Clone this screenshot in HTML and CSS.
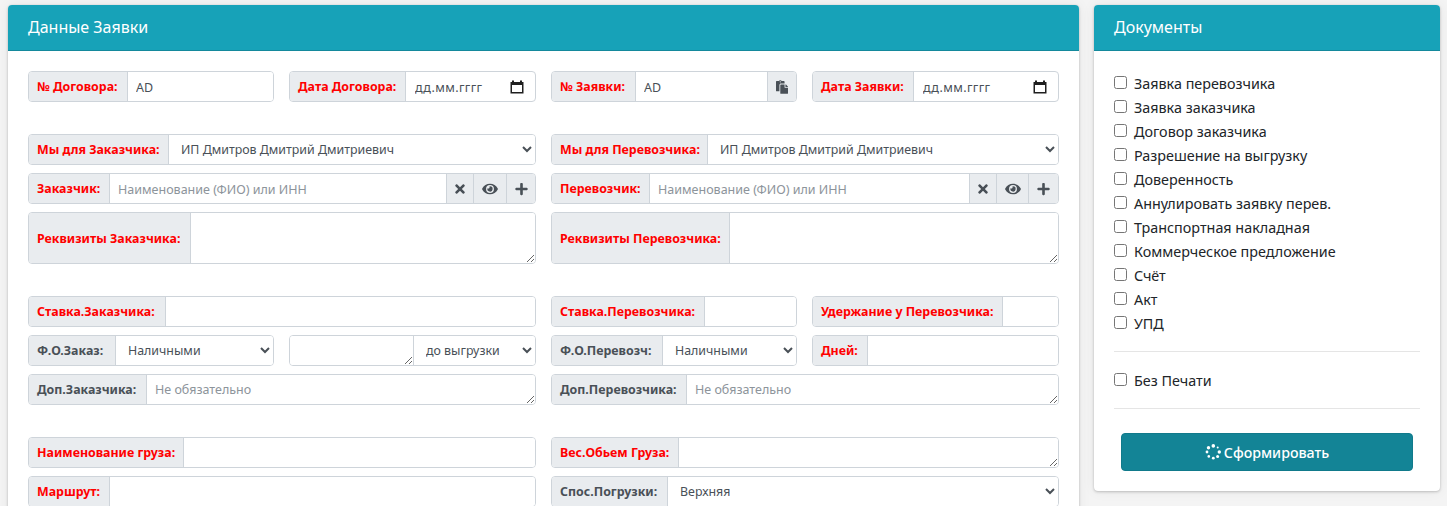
FILE: index.html
```html
<!DOCTYPE html>
<html lang="ru">
<head>
<meta charset="utf-8">
<title>Данные Заявки</title>
<link rel="stylesheet" href="styles.css">
</head>
<body>
<svg class="sprite" width="0" height="0" aria-hidden="true">
  <symbol id="i-times" viewBox="0 0 352 512"><path d="M242.72 256l100.07-100.07c12.28-12.28 12.28-32.19 0-44.48l-22.24-22.24c-12.28-12.28-32.19-12.28-44.48 0L176 189.28 75.93 89.21c-12.28-12.28-32.19-12.28-44.48 0L9.21 111.45c-12.28 12.28-12.28 32.19 0 44.48L109.28 256 9.21 356.07c-12.28 12.28-12.28 32.19 0 44.48l22.24 22.24c12.28 12.28 32.2 12.28 44.48 0L176 322.72l100.07 100.07c12.28 12.28 32.2 12.28 44.48 0l22.24-22.24c12.28-12.28 12.28-32.19 0-44.48L242.72 256z"/></symbol>
  <symbol id="i-eye" viewBox="0 0 576 512"><path d="M572.52 241.4C518.29 135.59 410.93 64 288 64S57.68 135.64 3.48 241.41a32.35 32.35 0 0 0 0 29.19C57.71 376.41 165.07 448 288 448s230.32-71.64 284.52-177.41a32.35 32.35 0 0 0 0-29.19zM288 400a144 144 0 1 1 144-144 143.93 143.93 0 0 1-144 144zm0-240a95.31 95.31 0 0 0-25.31 3.79 47.85 47.85 0 0 1-66.9 66.9A95.78 95.78 0 1 0 288 160z"/></symbol>
  <symbol id="i-plus" viewBox="0 0 448 512"><path d="M416 208H272V64c0-17.67-14.33-32-32-32h-32c-17.67 0-32 14.33-32 32v144H32c-17.67 0-32 14.33-32 32v32c0 17.67 14.33 32 32 32h144v144c0 17.67 14.33 32 32 32h32c17.67 0 32-14.33 32-32V304h144c17.67 0 32-14.33 32-32v-32c0-17.67-14.33-32-32-32z"/></symbol>
  <symbol id="i-paste" viewBox="0 0 448 512"><path d="M128 184c0-30.879 25.122-56 56-56h136V56c0-13.255-10.745-24-24-24h-80.61C204.306 12.89 183.637 0 160 0s-44.306 12.89-55.39 32H24C10.745 32 0 42.745 0 56v336c0 13.255 10.745 24 24 24h104V184zm32-144c13.255 0 24 10.745 24 24s-10.745 24-24 24-24-10.745-24-24 10.745-24 24-24zm184 248h104v200c0 13.255-10.745 24-24 24H184c-13.255 0-24-10.745-24-24V184c0-13.255 10.745-24 24-24h136v104c0 13.2 10.8 24 24 24zm104-38.059V256h-96v-96h6.059a24 24 0 0 1 16.97 7.029l65.941 65.941a24.002 24.002 0 0 1 7.03 16.971z"/></symbol>
  <symbol id="i-cal" viewBox="0 0 16 16"><path d="M3 1.5h2V3h6V1.5h2V3h1.5v11.5h-13V3H3zM3 6v7h10V6z" fill-rule="evenodd"/></symbol>
</svg>

<div class="page">
  <main class="card">
    <header class="card-head">Данные Заявки</header>
    <div class="card-body">

      <section class="section">
        <div class="col">
          <div class="split">
            <div class="group"><label class="lbl req w-dog">№ Договора:</label><input class="ctl" type="text" value="AD"></div>
            <div class="group"><label class="lbl req w-ddog">Дата Договора:</label><div class="date"><input class="ctl date-in" type="text" value="дд.мм.гггг"><svg class="cal"><use href="#i-cal"/></svg></div></div>
          </div>
        </div>
        <div class="col">
          <div class="split">
            <div class="group"><label class="lbl req w-zay">№ Заявки:</label><input class="ctl" type="text" value="AD"><span class="addon w-paste"><svg class="ic ic-paste"><use href="#i-paste"/></svg></span></div>
            <div class="group"><label class="lbl req w-dzay">Дата Заявки:</label><div class="date"><input class="ctl date-in" type="text" value="дд.мм.гггг"><svg class="cal"><use href="#i-cal"/></svg></div></div>
          </div>
        </div>
      </section>

      <section class="section">
        <div class="col">
          <div class="group"><label class="lbl req w-myz">Мы для Заказчика:</label><select class="ctl sel"><option>ИП Дмитров Дмитрий Дмитриевич</option></select></div>
          <div class="group"><label class="lbl req w-zak">Заказчик:</label><input class="ctl" type="text" placeholder="Наименование (ФИО) или ИНН"><span class="addon w-x"><svg class="ic ic-x"><use href="#i-times"/></svg></span><span class="addon w-eye"><svg class="ic ic-eye"><use href="#i-eye"/></svg></span><span class="addon w-plus-l"><svg class="ic ic-plus"><use href="#i-plus"/></svg></span></div>
          <div class="group tall"><label class="lbl req w-rz">Реквизиты Заказчика:</label><textarea class="ctl area"></textarea></div>
        </div>
        <div class="col">
          <div class="group"><label class="lbl req w-myp">Мы для Перевозчика:</label><select class="ctl sel"><option>ИП Дмитров Дмитрий Дмитриевич</option></select></div>
          <div class="group"><label class="lbl req w-per">Перевозчик:</label><input class="ctl" type="text" placeholder="Наименование (ФИО) или ИНН"><span class="addon w-x"><svg class="ic ic-x"><use href="#i-times"/></svg></span><span class="addon w-eye2"><svg class="ic ic-eye"><use href="#i-eye"/></svg></span><span class="addon w-plus"><svg class="ic ic-plus"><use href="#i-plus"/></svg></span></div>
          <div class="group tall"><label class="lbl req w-rp">Реквизиты Перевозчика:</label><textarea class="ctl area"></textarea></div>
        </div>
      </section>

      <section class="section">
        <div class="col">
          <div class="group"><label class="lbl req w-sz">Ставка.Заказчика:</label><input class="ctl" type="text"></div>
          <div class="split">
            <div class="group"><label class="lbl w-foz">Ф.О.Заказ:</label><select class="ctl sel"><option>Наличными</option></select></div>
            <div class="group"><textarea class="ctl area first w-ta"></textarea><select class="ctl sel"><option>до выгрузки</option></select></div>
          </div>
          <div class="group"><label class="lbl w-dopz">Доп.Заказчика:</label><textarea class="ctl area" placeholder="Не обязательно"></textarea></div>
        </div>
        <div class="col">
          <div class="split">
            <div class="group"><label class="lbl req w-sp">Ставка.Перевозчика:</label><input class="ctl" type="text"></div>
            <div class="group"><label class="lbl req w-ud">Удержание у Перевозчика:</label><input class="ctl" type="text"></div>
          </div>
          <div class="split">
            <div class="group"><label class="lbl w-fop">Ф.О.Перевозч:</label><select class="ctl sel"><option>Наличными</option></select></div>
            <div class="group"><label class="lbl req w-dn">Дней:</label><input class="ctl" type="text"></div>
          </div>
          <div class="group"><label class="lbl w-dopp">Доп.Перевозчика:</label><textarea class="ctl area" placeholder="Не обязательно"></textarea></div>
        </div>
      </section>

      <section class="section">
        <div class="col">
          <div class="group"><label class="lbl req w-gr">Наименование груза:</label><input class="ctl" type="text"></div>
          <div class="group"><label class="lbl req w-zak">Маршрут:</label><input class="ctl" type="text"></div>
        </div>
        <div class="col">
          <div class="group"><label class="lbl req w-ves">Вес.Обьем Груза:</label><textarea class="ctl area"></textarea></div>
          <div class="group"><label class="lbl w-sp2">Спос.Погрузки:</label><select class="ctl sel"><option>Верхняя</option></select></div>
        </div>
      </section>

    </div>
  </main>

  <aside class="card docs">
    <header class="card-head">Документы</header>
    <div class="docs-body">
      <ul class="checks">
        <li><label class="check"><input type="checkbox">Заявка перевозчика</label></li>
        <li><label class="check"><input type="checkbox">Заявка заказчика</label></li>
        <li><label class="check"><input type="checkbox">Договор заказчика</label></li>
        <li><label class="check"><input type="checkbox">Разрешение на выгрузку</label></li>
        <li><label class="check"><input type="checkbox">Доверенность</label></li>
        <li><label class="check"><input type="checkbox">Аннулировать заявку перев.</label></li>
        <li><label class="check"><input type="checkbox">Транспортная накладная</label></li>
        <li><label class="check"><input type="checkbox">Коммерческое предложение</label></li>
        <li><label class="check"><input type="checkbox">Счёт</label></li>
        <li><label class="check"><input type="checkbox">Акт</label></li>
        <li><label class="check"><input type="checkbox">УПД</label></li>
      </ul>
      <hr class="rule">
      <label class="check solo"><input type="checkbox">Без Печати</label>
      <hr class="rule">
      <button class="btn" type="button">
        <svg class="spin" viewBox="0 0 16 16"><circle cx="8.3" cy="1.9" r="1.8"/><circle cx="12.7" cy="3.6" r="1"/><circle cx="14.3" cy="8" r="1.7"/><circle cx="12.6" cy="12.4" r="1.5"/><circle cx="8.3" cy="14.2" r="1.4"/><circle cx="3.8" cy="12.4" r="1.3"/><circle cx="2" cy="8" r="1.4"/><circle cx="3.5" cy="3.7" r="1.7"/></svg>Сформировать
      </button>
    </div>
  </aside>
</div>
</body>
</html>
```
FILE: styles.css
```css
* { box-sizing: border-box; }
html, body { margin: 0; height: 100%; overflow: hidden; }
body {
  background: #f4f4f4;
  font-family: "Noto Sans", "Open Sans", sans-serif;
  color: #212529;
  font-size: 13px;
}
.sprite { position: absolute; }

.page {
  display: flex;
  align-items: flex-start;
  gap: 15px;
  padding: 5px 7px 0 8px;
}
.card {
  flex: 1;
  min-width: 0;
  background: #fff;
  border-radius: 4px;
  box-shadow: 0 0 1px rgba(0,0,0,.125), 0 1px 3px rgba(0,0,0,.2), 0 0 14px rgba(0,0,0,.06);
}
.docs { flex: 0 0 346px; }
.card-head {
  height: 46px;
  padding: 0 20px 2px;
  display: flex;
  align-items: center;
  background: #17a2b8;
  color: #fff;
  font-size: 16px;
  border-radius: 4px 4px 0 0;
  border-bottom: 1px solid #14899c;
}
.card-body {
  padding: 20px;
  display: flex;
  flex-direction: column;
  gap: 32px;
}

.section {
  display: grid;
  grid-template-columns: 508px 508px;
  gap: 15px;
}
.col { display: flex; flex-direction: column; gap: 8px; }
.split {
  display: grid;
  grid-template-columns: 246px 247px;
  gap: 15px;
}
.group {
  display: flex;
  height: 31px;
  min-width: 0;
  border: 1px solid #ced4da;
  border-radius: 4px;
  overflow: hidden;
  background: #fff;
}
.tall { height: 52px; }

.lbl {
  flex: none;
  display: flex;
  align-items: center;
  padding-left: 8px;
  background: #e9ecef;
  color: #495057;
  font-weight: 700;
  font-size: 12.4px;
  white-space: nowrap;
}
.req { color: #f00; }

.ctl {
  flex: 1;
  min-width: 0;
  height: 100%;
  margin: 0;
  padding: 2px 8px 0;
  border: 0;
  border-left: 1px solid #ced4da;
  background: #fff;
  color: #495057;
  font-family: inherit;
  font-size: 12.5px;
  outline: none;
}
.ctl::placeholder { color: #8d949b; opacity: 1; }
.ctl.first { border-left: 0; }
.sel { padding: 0 0 0 8px; font-size: 12.4px; }
.area { padding: 6px 8px 0; resize: both; display: block; line-height: 18px; }
.w-ta { flex: none; width: 123px; }

.date { flex: 1; min-width: 0; display: flex; align-items: center; }
.date-in { padding-left: 9px; letter-spacing: .4px; }
.cal { flex: none; width: 16px; height: 16px; margin-right: 10px; fill: #1f1f1f; }

.addon {
  flex: none;
  display: flex;
  align-items: center;
  justify-content: center;
  background: #e9ecef;
  border-left: 1px solid #ced4da;
  color: #495057;
}
.ic { fill: currentColor; }
.ic-x { width: 12px; height: 14px; }
.ic-eye { width: 16px; height: 14px; }
.ic-plus { width: 13px; height: 14px; }
.ic-paste { width: 12px; height: 14px; }

.w-dog { width: 98px; }
.w-ddog { width: 115px; }
.w-zay { width: 83px; }
.w-dzay { width: 100px; }
.w-myz { width: 139px; }
.w-myp { width: 155px; }
.w-zak { width: 80px; }
.w-per { width: 97px; }
.w-rz { width: 161px; }
.w-rp { width: 177px; }
.w-sz { width: 136px; }
.w-sp { width: 152px; }
.w-ud { width: 189px; }
.w-foz { width: 86px; }
.w-fop { width: 110px; }
.w-dn { width: 54px; }
.w-dopz { width: 117px; }
.w-dopp { width: 134px; }
.w-gr { width: 154px; }
.w-ves { width: 126px; }
.w-sp2 { width: 115px; }
.w-paste { width: 29px; }
.w-x { width: 27px; }
.w-eye { width: 33px; }
.w-eye2 { width: 32px; }
.w-plus { width: 30px; }
.w-plus-l { width: 29px; }

.docs-body {
  padding: 20px 20px 20px;
  display: flex;
  flex-direction: column;
}
.checks { list-style: none; margin: 0; padding: 0; }
.check {
  display: flex;
  align-items: center;
  height: 24px;
  font-size: 14.35px;
  color: #212529;
}
.check input { margin: 0 7px 2px 0; width: 13px; height: 13px; flex: none; }
.solo { margin: 16px 0; }
.rule { width: 100%; margin: 16px 0 0; border: 0; border-top: 1px solid rgba(0,0,0,.1); }
.solo + .rule { margin-top: 0; }
.btn {
  align-self: center;
  width: 292px;
  height: 38px;
  margin-top: 24px;
  display: flex;
  align-items: center;
  justify-content: center;
  gap: 3px;
  background: #138496;
  border: 1px solid #117a8b;
  border-radius: 4px;
  color: #fff;
  font-family: inherit;
  font-size: 14.2px;
  font-weight: 500;
}
.spin { width: 16px; height: 16px; fill: #fff; }
```
